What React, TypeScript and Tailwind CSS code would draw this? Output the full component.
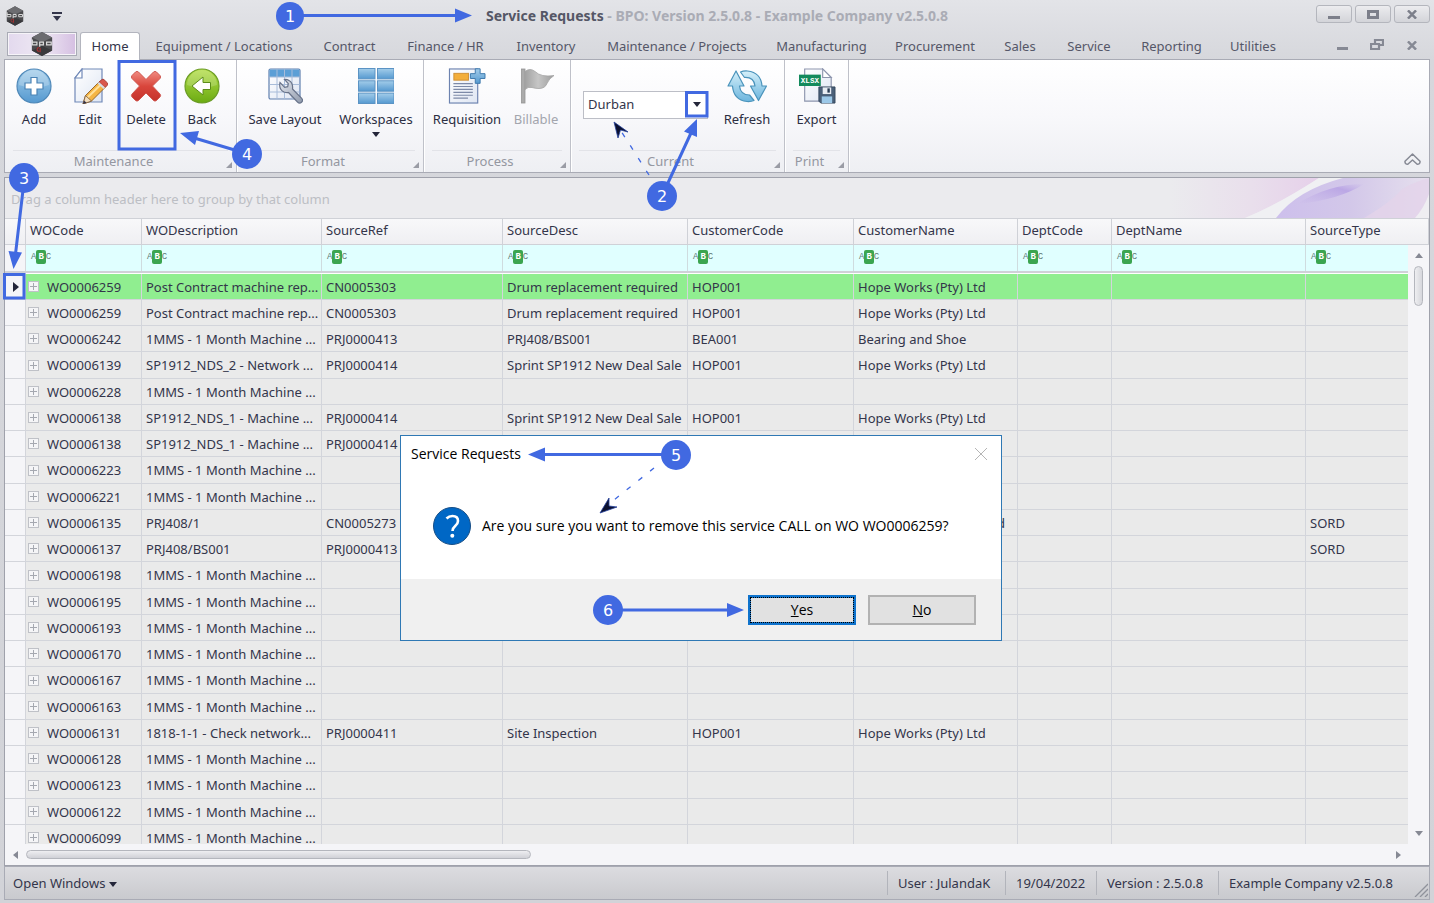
import type { ReactNode } from "react";

const tabs = [
  { name: "Equipment / Locations", width: "w-[168px]" },
  { name: "Contract", width: "w-[83px]" },
  { name: "Finance / HR", width: "w-[109px]" },
  { name: "Inventory", width: "w-[92px]" },
  { name: "Maintenance / Projects", width: "w-[170px]" },
  { name: "Manufacturing", width: "w-[119px]" },
  { name: "Procurement", width: "w-[108px]" },
  { name: "Sales", width: "w-[62px]" },
  { name: "Service", width: "w-[76px]" },
  { name: "Reporting", width: "w-[89px]" },
  { name: "Utilities", width: "w-[74px]" },
];

const columns = [
  { name: "WOCode", width: "w-[116px]" },
  { name: "WODescription", width: "w-[180px]" },
  { name: "SourceRef", width: "w-[181px]" },
  { name: "SourceDesc", width: "w-[185px]" },
  { name: "CustomerCode", width: "w-[166px]" },
  { name: "CustomerName", width: "w-[164px]" },
  { name: "DeptCode", width: "w-[94px]" },
  { name: "DeptName", width: "w-[194px]" },
  { name: "SourceType", width: "" },
];

const month = "1MMS - 1 Month Machine ...";
const hope = "Hope Works (Pty) Ltd";

const rows: string[][] = [
  ["WO0006259", "Post Contract machine rep...", "CN0005303", "Drum replacement required", "HOP001", hope],
  ["WO0006259", "Post Contract machine rep...", "CN0005303", "Drum replacement required", "HOP001", hope],
  ["WO0006242", month, "PRJ0000413", "PRJ408/BS001", "BEA001", "Bearing and Shoe"],
  ["WO0006139", "SP1912_NDS_2 - Network ...", "PRJ0000414", "Sprint SP1912 New Deal Sale", "HOP001", hope],
  ["WO0006228", month],
  ["WO0006138", "SP1912_NDS_1 - Machine ...", "PRJ0000414", "Sprint SP1912 New Deal Sale", "HOP001", hope],
  ["WO0006138", "SP1912_NDS_1 - Machine ...", "PRJ0000414"],
  ["WO0006223", month],
  ["WO0006221", month],
  ["WO0006135", "PRJ408/1", "CN0005273", "", "", "Ltd", "", "", "SORD"],
  ["WO0006137", "PRJ408/BS001", "PRJ0000413", "", "", "", "", "", "SORD"],
  ["WO0006198", month],
  ["WO0006195", month],
  ["WO0006193", month],
  ["WO0006170", month],
  ["WO0006167", month],
  ["WO0006163", month],
  ["WO0006131", "1818-1-1 - Check network...", "PRJ0000411", "Site Inspection", "HOP001", hope],
  ["WO0006128", month],
  ["WO0006123", month],
  ["WO0006122", month],
  ["WO0006099", month],
];

function Gradients() {
  return (
    <svg className="absolute size-0" aria-hidden="true">
      <defs>
        <linearGradient id="blue" x1="0" y1="0" x2="0" y2="1">
          <stop offset="0" stopColor="#a3cdea" />
          <stop offset="1" stopColor="#5599d0" />
        </linearGradient>
        <linearGradient id="green" x1="0" y1="0" x2="0" y2="1">
          <stop offset="0" stopColor="#b4de4a" />
          <stop offset="1" stopColor="#6bab12" />
        </linearGradient>
        <linearGradient id="red" x1="0" y1="0" x2="0" y2="1">
          <stop offset="0" stopColor="#f08a80" />
          <stop offset="0.5" stopColor="#d9463c" />
          <stop offset="1" stopColor="#c4322b" />
        </linearGradient>
        <linearGradient id="paper" x1="0" y1="0" x2="1" y2="1">
          <stop offset="0" stopColor="#ffffff" />
          <stop offset="1" stopColor="#dfe6f3" />
        </linearGradient>
        <linearGradient id="steel" x1="0" y1="0" x2="1" y2="1">
          <stop offset="0" stopColor="#e4e8ef" />
          <stop offset="1" stopColor="#8f99ab" />
        </linearGradient>
        <linearGradient id="flag" x1="0" y1="0" x2="1" y2="0">
          <stop offset="0" stopColor="#a2a2a2" />
          <stop offset="0.45" stopColor="#c6c6c6" />
          <stop offset="1" stopColor="#9d9d9d" />
        </linearGradient>
        <linearGradient id="aqua" x1="0" y1="0" x2="0" y2="1">
          <stop offset="0" stopColor="#d5f0fa" />
          <stop offset="1" stopColor="#6cb5dd" />
        </linearGradient>
      </defs>
    </svg>
  );
}

function Logo({ className }: { className: string }) {
  return (
    <svg viewBox="0 0 24 26" className={className} aria-hidden="true">
      <path d="M12 0 23 6v14l-11 6L1 20V6Z" fill="#4a4a4d" />
      <path d="M12 0 23 6l-11 5L1 6Z" fill="#6c6c70" />
      <path d="M12 15 23 20l-11 6L1 20Z" fill="#39393c" />
      <path
        d="M1.500 8v6h5v-3h-5M9.500 16v-5h4v3h-4M17 11h5v3h-5Z"
        fill="none"
        stroke="#dcdcdc"
        strokeWidth="1.300"
      />
      <path d="M9 17c-3 0-3 4 0 4M10 17v5" fill="none" stroke="#a33232" strokeWidth="1.300" />
    </svg>
  );
}

function Icon({ children }: { children: ReactNode }) {
  return (
    <svg viewBox="0 0 36 36" className="size-9 shrink-0" aria-hidden="true">
      {children}
    </svg>
  );
}

const addIcon = (
  <Icon>
    <circle cx="18" cy="18" r="17" fill="url(#blue)" stroke="#4f88b8" strokeWidth="1.200" />
    <path d="M3 17a15 15 0 0 1 30 0q-15 6-30 0Z" fill="#fff" opacity=".22" />
    <path d="M15 9.500h6V15h6v6h-6v6h-6v-6H9v-6h6Z" fill="#fff" stroke="#4a83b5" strokeWidth="1.200" />
  </Icon>
);

const editIcon = (
  <Icon>
    <path d="M10 1h20v33H3V10Z" fill="url(#paper)" stroke="#7189b8" strokeWidth="1.200" />
    <path d="M10 1v9H3Z" fill="#fff" stroke="#7189b8" strokeWidth="1.200" />
    <path d="m11 36 2.500-8.500L28 13l6 5.500L19.500 33Z" fill="#f4b544" stroke="#96672e" strokeWidth="1" />
    <path d="m15.500 29.500 14.500-14" stroke="#ffe09a" strokeWidth="2" />
    <path d="m27 14 3-2.500q1-.8 2 .2l3.500 3.300q1 1 0 2L33 19.500Z" fill="#d9574c" stroke="#a9403a" />
    <path d="m25.500 15.500 6 5.500 1.500-1.500-6-5.500Z" fill="#d8dce4" />
    <path d="m11 36 2.500-8.500 6 5.500Z" fill="#f3dfbf" stroke="#7a5a3c" strokeWidth=".8" />
    <path d="m11 36 1-3.500 2.600 2.300Z" fill="#33334a" />
  </Icon>
);

const deleteIcon = (
  <Icon>
    <path
      d="M4 7.500 7.500 4q1.500-1.200 3 0L18 11.500 25.500 4q1.500-1.200 3 0L32 7.500q1.200 1.500 0 3L24.500 18l7.500 8q1.200 1.500 0 3l-3.500 3.500q-1.500 1.200-3 0L18 25l-7.500 7.500q-1.500 1.200-3 0L4 29q-1.200-1.500 0-3l7.500-8L4 10.500q-1.200-1.500 0-3Z"
      fill="url(#red)"
      stroke="#cf5750"
      strokeWidth="1"
    />
  </Icon>
);

const backIcon = (
  <Icon>
    <circle cx="18" cy="18" r="17" fill="url(#green)" stroke="#6b9c26" strokeWidth="1.200" />
    <path d="M3 17a15 15 0 0 1 30 0q-15 6-30 0Z" fill="#fff" opacity=".18" />
    <path d="M8 18 19 9v5.500h7.500v7H19V27Z" fill="#fff" stroke="#5d8c1b" strokeWidth="1" />
  </Icon>
);

const layoutIcon = (
  <Icon>
    <rect x="2" y="1" width="31" height="30" rx="1.500" fill="url(#paper)" stroke="#5f7fae" strokeWidth="1.200" />
    <path d="M2.500 1.500h30V9h-30Z" fill="#5b9fd6" />
    <path d="M2.500 9h30M2.500 16.500h30M2.500 24h30M10 1.500v29M17.500 1.500v29M25 1.500v29" stroke="#a8bcd9" strokeWidth="1" />
    <path
      d="M13 14.500q-1.500 7 4 9.500 3 1 4.500.5l9 9.500q2 2 4 .3 2-2 .2-4L25.500 21q.8-6-3.500-8.500-2-1.300-4.500-1l3.800 4.200-.6 3-3 .6Z"
      fill="url(#steel)"
      stroke="#68738a"
      strokeWidth="1.200"
    />
  </Icon>
);

const workspacesIcon = (
  <Icon>
    {[0, 1].map((x) =>
      [0, 1, 2].map((y) => (
        <rect
          key={`${x}-${y}`}
          x={x * 19 + 0.5}
          y={y * 12.3 + 0.5}
          width="16.5"
          height="10.4"
          fill="url(#blue)"
          stroke="#5b93c4"
        />
      )),
    )}
  </Icon>
);

const requisitionIcon = (
  <svg viewBox="0 0 38 37" className="h-9 w-[38px] shrink-0" aria-hidden="true">
    <rect x="1" y="1" width="29" height="35" fill="url(#paper)" stroke="#6d83b0" strokeWidth="1.200" />
    <rect x="5.500" y="5.500" width="15" height="7" fill="#f3ae3a" stroke="#cf9136" />
    <path d="M5 16h20M5 19h20M5 22h20M5 25h20M5 28h20M5 31h15" stroke="#7d8aa8" strokeWidth="1.200" />
    <path d="M27.500.8h5v5h5v5h-5v5h-5v-5h-5v-5h5Z" fill="url(#blue)" stroke="#3f79ad" />
  </svg>
);

const flagIcon = (
  <Icon>
    <rect x="3.500" y="1" width="3.500" height="34" fill="#ababab" stroke="#959595" strokeWidth=".8" />
    <path d="M7 3.500q5-4 10 0 6 6 19 4-5 3-7 8-2 5-8 5-4 0-7-1-4-1-7 2Z" fill="url(#flag)" stroke="#a3a3a3" strokeWidth=".8" />
  </Icon>
);

const refreshIcon = (
  <svg viewBox="0 0 40 36" className="h-9 w-10 shrink-0" aria-hidden="true">
    <g fill="url(#aqua)" stroke="#4a93bb" strokeWidth="1.200" strokeLinejoin="round">
      <path d="M9 3 1 18h4.500q1 14 14.500 15.500 4 .3 7-1L22.500 27Q13.500 27 12.500 18H17Z" />
      <path d="M31.500 32.500 39.500 18H35Q34 4.500 20.500 3q-4-.3-7 1l4 5.500Q27 9 28 18h-4.500Z" />
    </g>
  </svg>
);

const exportIcon = (
  <svg viewBox="0 0 40 38" className="h-9 w-10 shrink-0" aria-hidden="true">
    <path d="M7 1h19l9 9v25H7Z" fill="url(#paper)" stroke="#8d95ad" strokeWidth="1.200" />
    <path d="M26 1v9h9Z" fill="#fff" stroke="#8d95ad" strokeWidth="1.200" />
    <rect x="1" y="7" width="23" height="12" fill="#138a5c" />
    <text x="12.500" y="16" textAnchor="middle" fontSize="8" fontWeight="bold" fill="#fff" fontFamily="Liberation Mono, monospace">
      XLSX
    </text>
    <path d="M22 20h17v17H24l-2-2Z" fill="#4b6079" stroke="#33465c" />
    <rect x="26" y="20.500" width="9" height="7" fill="#e9edf3" />
    <rect x="31" y="21.500" width="2.500" height="4.500" fill="#283b52" />
    <rect x="25" y="30" width="11" height="7" fill="#9cc8e8" />
  </svg>
);

function RibbonButton({
  icon,
  label,
  width,
  disabled,
  menu,
}: {
  icon: ReactNode;
  label: string;
  width: string;
  disabled?: boolean;
  menu?: boolean;
}) {
  return (
    <button
      type="button"
      disabled={disabled}
      className={`flex flex-col items-center whitespace-nowrap text-[#2c2e42] disabled:text-[#a3a5ad] ${width}`}
    >
      {icon}
      <span className="mt-[5px] leading-5">{label}</span>
      {menu && <span className="mt-[3px] border-x-4 border-t-5 border-x-transparent border-t-[#24263a]" />}
    </button>
  );
}

function RibbonGroup({ title, width, children }: { title: string; width: string; children: ReactNode }) {
  return (
    <section
      aria-label={title}
      className={`flex shrink-0 flex-col border-r border-[#bfc1c9] shadow-[1px_0_0_#fff] ${width}`}
    >
      <div className="flex flex-1 justify-center pt-2">{children}</div>
      <div className="relative mx-2 border-t border-[#e2e3e8] pr-3.5 text-center leading-[21px] text-[#9497a1]">
        {title}
        <svg viewBox="0 0 6 6" className="absolute -right-1 bottom-1 size-1.5" aria-hidden="true">
          <path d="M6 0v6H0Z" fill="#9a9ca5" />
        </svg>
      </div>
    </section>
  );
}

function FilterGlyph() {
  return (
    <span className="flex items-center pb-0.5 font-['Liberation_Mono',monospace] text-[9px] leading-3 text-[#5f7a78]">
      <span>A</span>
      <span className="rounded-xs bg-[#3ba550] px-0.5 leading-[14px] font-bold text-white">B</span>
      <span>C</span>
    </span>
  );
}

function Expander() {
  return (
    <button
      type="button"
      aria-label="Expand row"
      className="mr-2 size-[11px] shrink-0 border border-[#bfc1c7] bg-[#f5f5f7]"
    >
      <svg viewBox="0 0 9 9" className="size-[9px]" aria-hidden="true">
        <path d="M1 4.500h7M4.500 1v7" stroke="#a5a8b0" />
      </svg>
    </button>
  );
}

function WindowButton({ label, children }: { label: string; children: ReactNode }) {
  return (
    <button
      type="button"
      aria-label={label}
      className="flex h-[18px] w-9 items-center justify-center rounded-[3px] border border-[#b4b6bd] bg-linear-to-b from-[#ececef] to-[#d3d4d9] text-[#7c7f8a]"
    >
      {children}
    </button>
  );
}

function Cross({ className }: { className: string }) {
  return (
    <svg viewBox="0 0 12 10" className={className} aria-hidden="true">
      <path d="m1.500.5 9 9m0-9-9 9" stroke="currentColor" strokeWidth="2.800" />
    </svg>
  );
}

function TitleBar() {
  return (
    <header className="grid h-8 shrink-0 grid-cols-[1fr_auto_1fr] items-center">
      <div className="flex items-center gap-7 pl-0.5">
        <Logo className="h-5 w-[18px]" />
        <button type="button" aria-label="Customize toolbar" className="flex flex-col items-center gap-0.5">
          <span className="h-0.5 w-2.5 bg-[#33354a]" />
          <span className="border-x-4 border-t-5 border-x-transparent border-t-[#33354a]" />
        </button>
      </div>
      <h1 className="pb-0.5 text-[14px] font-bold text-[#aaacb5]">
        <span className="text-[#555766]">Service Requests</span> - BPO: Version 2.5.0.8 - Example Company v2.5.0.8
      </h1>
      <div className="flex justify-end gap-[3px] pb-1">
        <WindowButton label="Minimize">
          <span className="mt-1.5 h-[3px] w-3 bg-current" />
        </WindowButton>
        <WindowButton label="Maximize">
          <span className="h-[9px] w-3 border-[3px] border-current" />
        </WindowButton>
        <WindowButton label="Close">
          <Cross className="h-[9px] w-3" />
        </WindowButton>
      </div>
    </header>
  );
}

function TabStrip() {
  return (
    <nav className="flex h-[27px] shrink-0 items-end text-[#555768]">
      <button
        type="button"
        aria-label="Application menu"
        className="mb-[3px] ml-[3px] flex h-6 w-[70px] items-center justify-center border border-[#a9abb5] bg-linear-to-r from-[#e3d9ee] via-[#eee8f3] to-[#d5bfe2] shadow-[inset_0_0_0_1px_#f6f4f8]"
      >
        <Logo className="h-6 w-6" />
      </button>
      <button
        type="button"
        className="relative z-10 -mb-px ml-[3px] h-7 w-[60px] rounded-t-[3px] border border-b-0 border-[#b3b5be] bg-white pt-px text-[#33354a]"
      >
        Home
      </button>
      {tabs.map((tab) => (
        <button key={tab.name} type="button" className={`h-[26px] shrink-0 pt-0.5 whitespace-nowrap ${tab.width}`}>
          {tab.name}
        </button>
      ))}
      <div className="mb-1 ml-auto flex h-5 items-center gap-[22px] pr-3 text-[#868994]">
        <button type="button" aria-label="Minimize document">
          <span className="mt-1.5 block h-[3px] w-[11px] bg-current" />
        </button>
        <button type="button" aria-label="Restore document">
          <svg viewBox="0 0 14 12" className="h-3 w-3.5" fill="none" stroke="currentColor" strokeWidth="2.200" aria-hidden="true">
            <path d="M5 4V1h8v5h-3M1 5h8v5H1Z" />
          </svg>
        </button>
        <button type="button" aria-label="Close document">
          <Cross className="h-[9px] w-3" />
        </button>
      </div>
    </nav>
  );
}

function Ribbon() {
  return (
    <div className="flex h-[114px] shrink-0 border border-[#a9abb5] bg-linear-to-b from-white via-[#f8f8fb] to-[#eeeff3]">
      <RibbonGroup title="Maintenance" width="w-[232px]">
        <div className="flex flex-1 pl-px">
          <RibbonButton icon={addIcon} label="Add" width="w-14" />
          <RibbonButton icon={editIcon} label="Edit" width="w-14" />
          <RibbonButton icon={deleteIcon} label="Delete" width="w-14" />
          <RibbonButton icon={backIcon} label="Back" width="w-14" />
        </div>
      </RibbonGroup>
      <RibbonGroup title="Format" width="w-[187px]">
        <RibbonButton icon={layoutIcon} label="Save Layout" width="w-[92px]" />
        <RibbonButton icon={workspacesIcon} label="Workspaces" width="w-[90px]" menu />
      </RibbonGroup>
      <RibbonGroup title="Process" width="w-[147px]">
        <RibbonButton icon={requisitionIcon} label="Requisition" width="w-[78px]" />
        <RibbonButton icon={flagIcon} label="Billable" width="w-[60px]" disabled />
      </RibbonGroup>
      <RibbonGroup title="Current" width="w-[214px]">
        <div className="flex pl-1.5">
          <div className="relative mt-[23px] mr-2 h-7 w-[125px]">
            <select
              aria-label="Current site"
              className="h-7 w-full appearance-none border border-[#bcbec6] bg-white pl-1 text-[#33354a]"
            >
              <option>Durban</option>
            </select>
            <span className="pointer-events-none absolute top-[11px] right-[7px] border-x-4 border-t-5 border-x-transparent border-t-[#24263a]" />
          </div>
          <RibbonButton icon={refreshIcon} label="Refresh" width="w-[62px]" />
        </div>
      </RibbonGroup>
      <RibbonGroup title="Print" width="w-[64px]">
        <RibbonButton icon={exportIcon} label="Export" width="w-14" />
      </RibbonGroup>
      <button type="button" aria-label="Collapse ribbon" className="mt-auto mr-2 mb-1.5 ml-auto text-[#868994]">
        <svg viewBox="0 0 17 13" className="h-[13px] w-[17px]" fill="none" stroke="currentColor" strokeWidth="1.500" aria-hidden="true">
          <path d="M8.500 1 16 8.200q.3 3-2.800 3L8.500 7l-4.700 4.200Q.7 11.200 1 8.200Z" strokeLinejoin="round" />
        </svg>
      </button>
    </div>
  );
}

function GroupPanel() {
  return (
    <div className="relative flex h-[41px] shrink-0 items-center border-b border-[#cfd1d7] bg-[#ebebee] pt-1 pl-1.5">
      <svg viewBox="0 0 260 40" className="absolute top-0 right-0 h-10 w-[260px]" aria-hidden="true">
        <defs>
          <linearGradient id="pink" x1="0" y1="0" x2="1" y2="0">
            <stop offset="0" stopColor="#ebebee" />
            <stop offset="0.55" stopColor="#e9dfec" />
            <stop offset="1" stopColor="#e6d0ea" />
          </linearGradient>
          <linearGradient id="violet" x1="0" y1="0" x2="1" y2="0">
            <stop offset="0" stopColor="#cdbfec" />
            <stop offset="0.5" stopColor="#d3c8e9" />
            <stop offset="1" stopColor="#e6e0ee" />
          </linearGradient>
          <linearGradient id="streak" x1="0" y1="1" x2="1" y2="0">
            <stop offset="0" stopColor="#c3b2e8" stopOpacity="0" />
            <stop offset="0.7" stopColor="#bba7e5" />
            <stop offset="1" stopColor="#c3b2e8" stopOpacity="0" />
          </linearGradient>
        </defs>
        <path d="M0 0h150Q110 26 76 40H0Z" fill="url(#pink)" />
        <path d="M76 40Q110 26 150 0h24Q128 16 107 40Z" fill="#f0f0f3" />
        <path d="M107 40Q128 12 174 0h86v40Z" fill="url(#violet)" />
        <path d="M128 26Q160 6 195 6 170 22 128 26Z" fill="url(#streak)" />
        <path d="M195 40Q222 24 232 12q12-8 28-12v40Z" fill="#e4d3ea" opacity=".8" />
        <path d="M260 16v24h-14q9-10 14-24Z" fill="#efeef2" />
      </svg>
      <span className="text-[#bcbec4]">Drag a column header here to group by that column</span>
    </div>
  );
}

function Grid() {
  return (
    <div className="relative min-h-0 flex-1 overflow-hidden bg-[#eaeaea]">
      <table className="w-full table-fixed border-separate border-spacing-0 text-left text-[#33354a]">
        <colgroup>
          <col className="w-[21px]" />
          {columns.map((c) => (
            <col key={c.name} className={c.width} />
          ))}
        </colgroup>
        <thead>
          <tr className="h-[26px] bg-linear-to-b from-[#f8f8fa] to-[#efeff2]">
            <th aria-label="Row indicator" className="border-r border-b border-[#cfd1d7]" />
            {columns.map((c) => (
              <th key={c.name} scope="col" className="border-r border-b border-[#cfd1d7] p-0 pb-0.5 pl-1 font-normal">
                {c.name}
              </th>
            ))}
          </tr>
          <tr className="h-[26px] bg-[#e0ffff]">
            <td className="border-r border-[#d5d7dc] bg-[#f5f5f8]" />
            {columns.map((c) => (
              <td key={c.name} className="border-r border-[#cfdcdf] p-0 pl-[5px]">
                <FilterGlyph />
              </td>
            ))}
          </tr>
          <tr className="h-[3px] bg-white">
            <td colSpan={10} className="border-t-2 border-[#cfd1d7] p-0" />
          </tr>
        </thead>
        <tbody>
          {rows.map((row, i) => (
            <tr key={i} className="h-[26px] bg-[#eaeaea] first:bg-[#90ee90] nth-[4n]:h-[27px]">
              <td className="border-r border-b border-[#d3d5db] bg-[#f5f5f8] p-0">
                {i === 0 && (
                  <span className="ml-2 block size-0 border-y-5 border-l-6 border-y-transparent border-l-[#24263a]" />
                )}
              </td>
              {columns.map((c, j) => (
                <td
                  key={c.name}
                  className={`overflow-hidden border-r border-b border-[#d3d5db] p-0 leading-5 whitespace-nowrap ${
                    j === 0 ? "pl-0.5" : row[j] === "Ltd" ? "pr-3 text-right" : "pl-1"
                  }`}
                >
                  {j === 0 ? (
                    <span className="flex items-center">
                      <Expander />
                      {row[0]}
                    </span>
                  ) : (
                    row[j]
                  )}
                </td>
              ))}
            </tr>
          ))}
        </tbody>
      </table>
      <div className="absolute top-[26px] right-0 bottom-0 flex w-[21px] flex-col items-center bg-[#f5f5f8] py-2">
        <span className="border-x-4 border-b-5 border-x-transparent border-b-[#868994]" />
        <span className="mt-2 h-10 w-[9px] rounded-full border border-[#b4b6bd] bg-linear-to-r from-[#eeeef1] to-[#d6d7dc]" />
        <span className="mt-auto border-x-4 border-t-5 border-x-transparent border-t-[#868994]" />
      </div>
    </div>
  );
}

function StatusBar() {
  const cell = "flex h-6 items-center border-l border-[#b2b4bb] pt-0.5 whitespace-nowrap";
  return (
    <footer className="flex h-[34px] shrink-0 items-center border border-[#a9abb5] bg-linear-to-b from-[#dcdce0] to-[#c9cace] text-[#33354a]">
      <button type="button" className="flex items-center gap-1 pt-0.5 pl-2">
        Open Windows
        <span className="border-x-4 border-t-5 border-x-transparent border-t-[#24263a]" />
      </button>
      <div className="ml-auto flex">
        <span className={`w-[118px] pl-2.5 ${cell}`}>User : JulandaK</span>
        <span className={`w-[91px] pl-2.5 ${cell}`}>19/04/2022</span>
        <span className={`w-[122px] pl-2.5 ${cell}`}>Version : 2.5.0.8</span>
        <span className={`w-[196px] pl-2.5 ${cell}`}>Example Company v2.5.0.8</span>
      </div>
      <svg viewBox="0 0 14 14" className="mr-px mb-0.5 size-3.5 self-end" stroke="#8f929b" strokeWidth="1.300" aria-hidden="true">
        <path d="M1 14 14 1M6 14l8-8M11 14l3-3" />
      </svg>
    </footer>
  );
}

function ConfirmDialog() {
  return (
    <div
      role="dialog"
      aria-labelledby="dialog-title"
      className="absolute top-[435px] left-[400px] flex h-[206px] w-[602px] flex-col border border-[#2f78b4] bg-white font-['Open_Sans','Noto_Sans',sans-serif] text-[14px] text-black"
    >
      <div className="flex items-center justify-between pt-2 pr-3.5 pl-2.5">
        <h2 id="dialog-title" className="leading-5">Service Requests</h2>
        <button type="button" aria-label="Close dialog">
          <svg viewBox="0 0 12 12" className="size-3" stroke="#b5b5b5" aria-hidden="true">
            <path d="m0 0 12 12M12 0 0 12" />
          </svg>
        </button>
      </div>
      <div className="flex flex-1 items-center gap-[11px] pt-2 pl-8">
        <svg viewBox="0 0 38 38" className="size-[38px]" aria-hidden="true">
          <circle cx="19" cy="19" r="18.500" fill="#0067c5" stroke="#174e86" />
          <path d="M13.500 11.500q2.500-2.500 6-2.500 5.500 0 5.500 5 0 2.700-2.800 5-2.700 2.200-2.700 5" fill="none" stroke="#fff" strokeWidth="2.600" />
          <circle cx="19.300" cy="28.800" r="2" fill="#fff" />
        </svg>
        <p>Are you sure you want to remove this service CALL on WO WO0006259?</p>
      </div>
      <div className="flex h-[61px] items-center justify-end gap-3 bg-[#f0f0f0] pr-[25px]">
        <button
          type="button"
          className="h-[30px] w-[108px] border-[3px] border-[#0f73cc] bg-[#e1e1e1] outline-1 -outline-offset-3 outline-black outline-dotted"
        >
          <u>Y</u>es
        </button>
        <button type="button" className="h-[30px] w-[108px] border-2 border-[#b2b2b2] bg-[#e1e1e1]">
          <u>N</u>o
        </button>
      </div>
    </div>
  );
}

const badges = [
  { n: 1, x: 290, y: 16, r: 14 },
  { n: 2, x: 662, y: 196, r: 15 },
  { n: 3, x: 24, y: 178, r: 15 },
  { n: 4, x: 247, y: 154, r: 15 },
  { n: 5, x: 676, y: 455, r: 15 },
  { n: 6, x: 608, y: 610, r: 15 },
];

function Callouts() {
  return (
    <svg
      viewBox="0 0 1434 903"
      className="pointer-events-none absolute top-0 left-0 z-20 h-[903px] w-[1434px] max-w-none"
      aria-label="Numbered steps"
    >
      <g fill="none" stroke="#4169e1" strokeWidth="3">
        <rect x="119" y="61.500" width="56" height="87.500" />
        <rect x="686.500" y="92.500" width="20.500" height="23.500" />
        <rect x="4.500" y="274.500" width="19.500" height="23.500" />
        <path d="M300 15.500H458M238 151 196 138.500M23 190 15.500 254M667 185 691 133M664 454.500H544M620 610H730" />
      </g>
      <path
        fill="#4169e1"
        d="m472 15.500-17-7v14ZM180 133l19-2-4 14ZM13.500 269 8.500 251l13.500 1.500ZM697 119l-13 12.500 13 5.500ZM528 454.500l17-7v14ZM744 610l-17-7v14Z"
      />
      <g fill="none" stroke="#4169e1" strokeWidth="1.300" strokeDasharray="5 10">
        <path d="M649 175 621 131M654 468 609 504" />
      </g>
      <g fill="#0b1030" stroke="#24409c" strokeWidth=".8">
        <path d="m614 122 4 16 2.500-8 7.500 2ZM600 513l9-15v8l8 1Z" />
      </g>
      {badges.map((b) => (
        <g key={b.n}>
          <circle cx={b.x} cy={b.y} r={b.r} fill="#4169e1" />
          <text
            x={b.x}
            y={b.y + 6}
            textAnchor="middle"
            fontSize="16"
            fill="#fff"
            fontFamily="DejaVu Sans, sans-serif"
          >
            {b.n}
          </text>
        </g>
      ))}
    </svg>
  );
}

export default function App() {
  return (
    <div className="relative flex h-screen flex-col overflow-hidden bg-linear-to-b from-[#e3e4e8] via-[#d6d7dc] via-[60px] to-[#d2d3d8] px-1 pb-[3px] font-['Noto_Sans','Open_Sans',sans-serif] text-[13px]">
      <Gradients />
      <TitleBar />
      <TabStrip />
      <Ribbon />
      <main className="mt-1 flex min-h-0 flex-1 flex-col border border-[#9fa1ab]">
        <GroupPanel />
        <Grid />
        <div className="flex h-[21px] shrink-0 items-center bg-[#f5f5f8] px-2">
          <span className="border-y-4 border-r-5 border-y-transparent border-r-[#868994]" />
          <span className="ml-2 h-[9px] w-[505px] rounded-full border border-[#b4b6bd] bg-linear-to-b from-[#eeeef1] to-[#d0d1d7]" />
          <span className="mr-5 ml-auto border-y-4 border-l-5 border-y-transparent border-l-[#868994]" />
        </div>
      </main>
      <StatusBar />
      <ConfirmDialog />
      <Callouts />
    </div>
  );
}
